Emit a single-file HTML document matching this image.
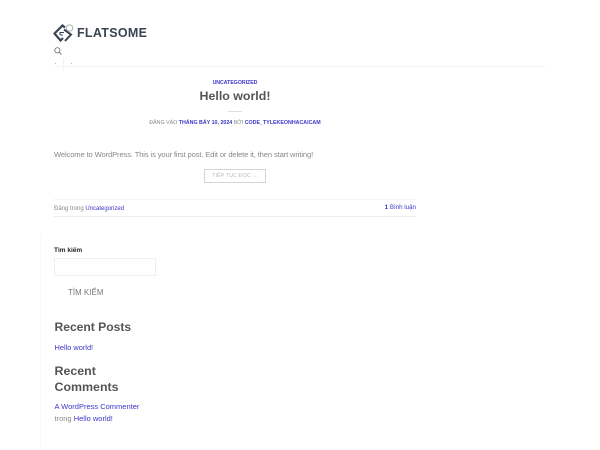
<!DOCTYPE html>
<html><head><meta charset="utf-8"><style>
html,body{margin:0;padding:0;background:#fff}
body{width:600px;height:450px;position:relative;overflow:hidden;font-family:"Liberation Sans",sans-serif;color:#777}
#p{position:absolute;left:0;top:0;width:600px;height:450px;filter:blur(.25px)}
.t{position:absolute;white-space:nowrap;line-height:1}
.l{position:absolute;background:#ececec}
a,.b{color:#3f36c9}
</style></head><body><div id="p">
<svg style="position:absolute;left:53px;top:23px" width="22" height="20" viewBox="0 0 22 20" fill="none">
<path d="M12 4.500L9.500 2.500 1.500 10.500 7.500 17.500 10 15" stroke="#3a4452" stroke-width="2.200"/>
<path d="M11 6.500L18 11.500 12 18" stroke="#3a4452" stroke-width="2"/>
<path d="M7 12V9.500H11M7 12H10" stroke="#3a4452" stroke-width="1.100"/>
<circle cx="16.500" cy="5" r="3.200" stroke="#a4a9b0" stroke-width=".9"/>
</svg>
<div class="t" style="left:77px;top:27px;font-size:12.500px;font-weight:700;letter-spacing:.3px;color:#3a4452">FLATSOME</div>
<svg style="position:absolute;left:54px;top:47px" width="8" height="8" viewBox="0 0 8 8" fill="none"><circle cx="3.300" cy="3.300" r="2.600" stroke="#777" stroke-width=".9"/><path d="M5.300 5.300L7.500 7.500" stroke="#777" stroke-width=".9"/></svg>
<div class="l" style="left:55px;top:63px;width:1px;height:1px;background:#bbb"></div>
<div class="l" style="left:71px;top:63px;width:1px;height:1px;background:#bbb"></div>
<div class="l" style="left:63px;top:58px;width:1px;height:12px;background:#f2f2f2"></div>
<div class="l" style="left:54px;top:66px;width:492px;height:1px;background:#f3f3f3"></div>

<div class="t b" style="left:135px;width:200px;text-align:center;top:80.500px;font-size:5.200px;font-weight:700">UNCATEGORIZED</div>
<div class="t" style="left:135px;width:200px;text-align:center;top:89.500px;font-size:12.400px;font-weight:700;color:#555">Hello world!</div>
<div class="l" style="left:228px;top:111px;width:14px;height:1px;background:#ddd"></div>
<div class="t" style="left:135px;width:200px;text-align:center;top:120.500px;font-size:5.300px;color:#888">ĐĂNG VÀO <b class="b">THÁNG BẢY 10, 2024</b> BỞI <b class="b">CODE_TYLEKEONHACAICAM</b></div>

<div class="t" style="left:54px;top:150.500px;font-size:7.600px;letter-spacing:-.13px;color:#888">Welcome to WordPress. This is your first post. Edit or delete it, then start writing!</div>
<div style="position:absolute;left:204px;top:169px;width:60px;height:12px;border:1px solid #d4d4d4"></div>
<div class="t" style="left:204px;width:62px;text-align:center;top:174px;font-size:5.200px;color:#bbb;letter-spacing:.2px">TIẾP TỤC ĐỌC →</div>

<div class="l" style="left:54px;top:199px;width:362px;height:1px;background:#f5f5f5"></div>
<div class="t" style="left:54px;top:205.500px;font-size:6px;color:#888">Đăng trong <a>Uncategorized</a></div>
<div class="t b" style="left:316px;width:100px;text-align:right;top:205px;font-size:6.200px"><b>1</b> Bình luận</div>
<div class="l" style="left:54px;top:216px;width:362px;height:1px;background:#ececec"></div>

<div class="l" style="left:40px;top:236px;width:1px;height:214px;background:#f8f8f8"></div>
<div class="t" style="left:54px;top:247.500px;font-size:6.500px;font-weight:700;color:#222">Tìm kiếm</div>
<div style="position:absolute;left:54px;top:258px;width:100px;height:16px;border:1px solid #eee"></div>
<div class="t" style="left:68px;top:288.500px;font-size:7.800px;color:#777;letter-spacing:.1px">TÌM KIẾM</div>
<div class="t" style="left:54.500px;top:321px;font-size:12.100px;font-weight:700;color:#555">Recent Posts</div>
<div class="t b" style="left:54.500px;top:343.500px;font-size:7.400px">Hello world!</div>
<div class="t" style="left:54.500px;top:365px;font-size:12.400px;font-weight:700;color:#555">Recent</div>
<div class="t" style="left:54.500px;top:381px;font-size:12.400px;font-weight:700;color:#555">Comments</div>
<div class="t b" style="left:54.500px;top:403px;font-size:7.500px">A WordPress Commenter</div>
<div class="t" style="left:54.500px;top:415px;font-size:7.500px;color:#888">trong <a>Hello world!</a></div>
</div></body></html>
